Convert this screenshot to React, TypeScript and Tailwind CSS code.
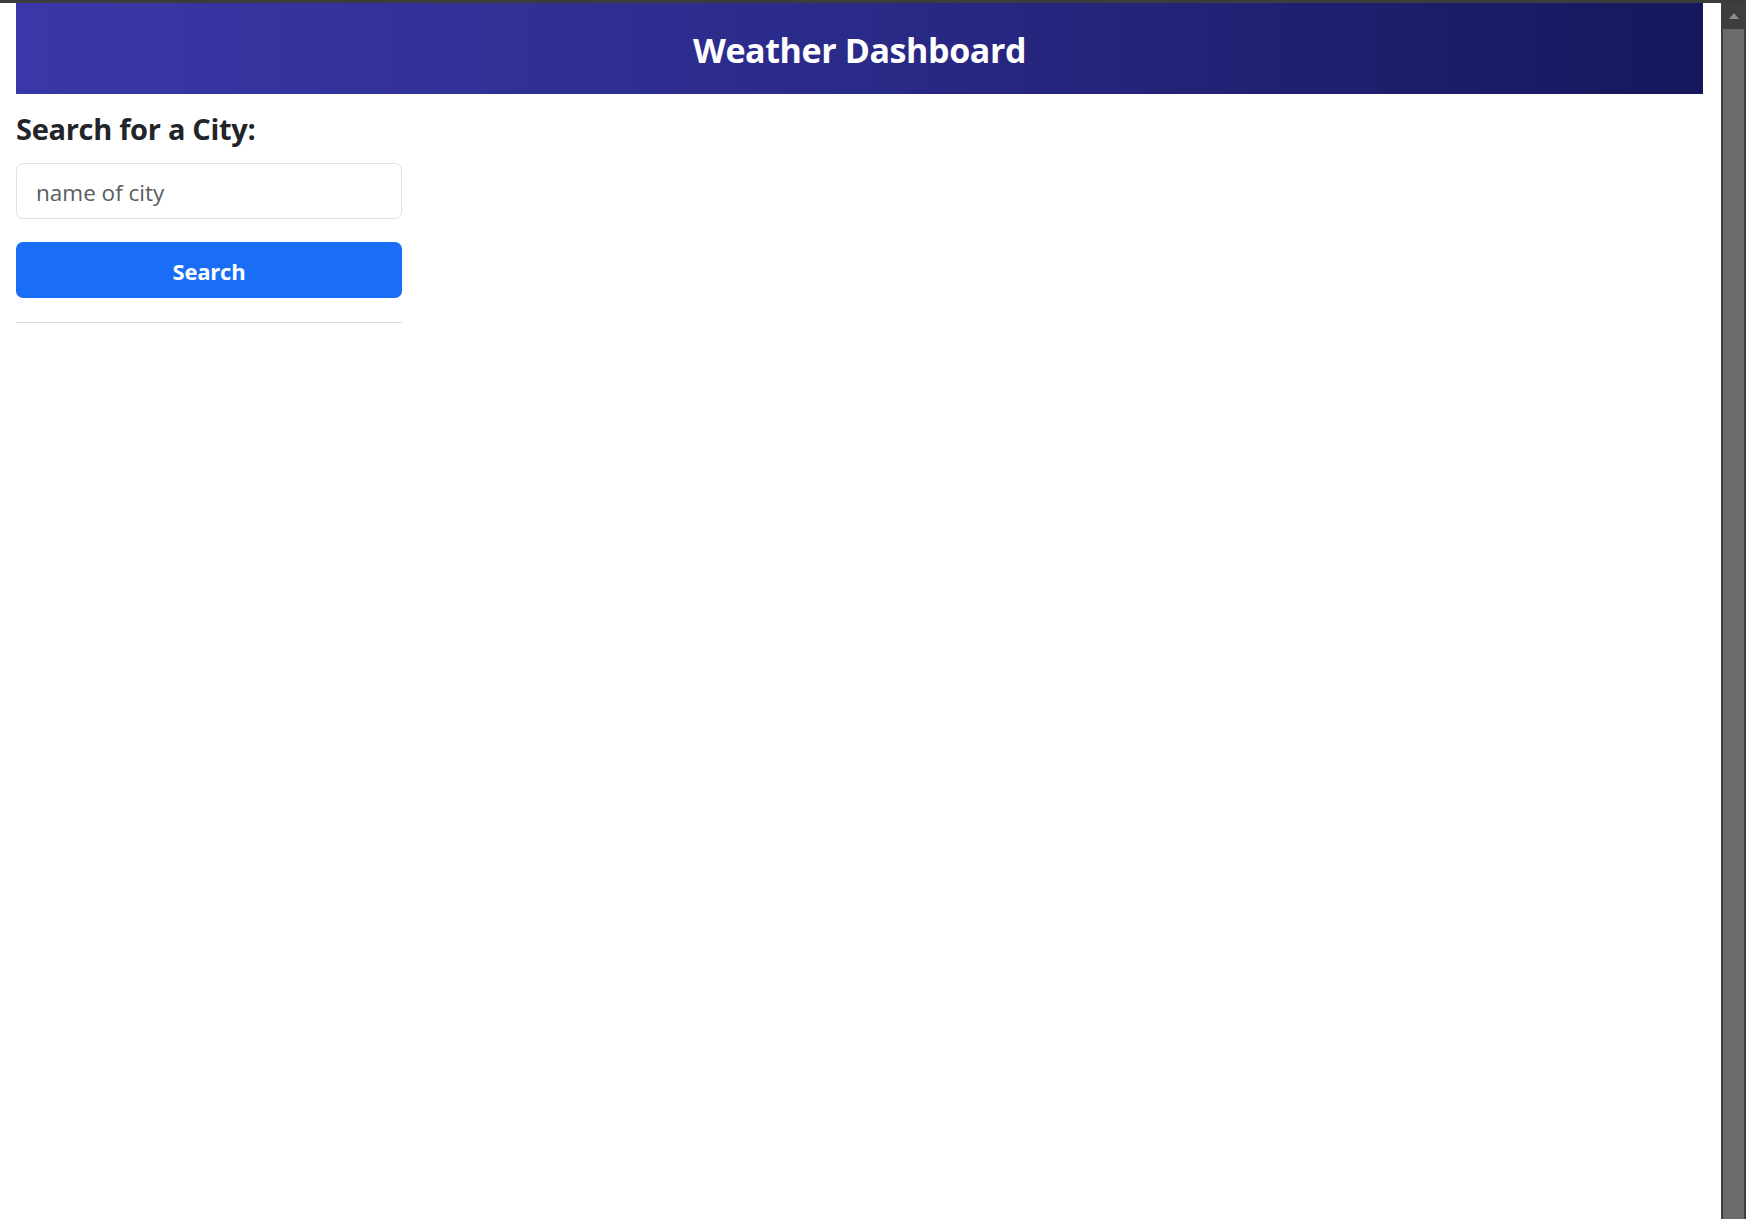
import React from "react";

export default function App() {
  return (
    <div
      className="w-full h-[1219px] flex flex-col bg-white overflow-hidden"
      style={{ fontFamily: '"Open Sans", "Noto Sans", sans-serif' }}
    >
      <div className="h-[3px] w-full bg-[#3c3c3c] shrink-0" />
      <div className="flex flex-row flex-1 min-h-0">
        <main className="flex-1 pl-[16px] pr-[18px]">
          <header className="h-[91px] w-full flex items-center justify-center bg-[linear-gradient(to_right,#3a38a8,#2a2a88_50%,#16175c)]">
            <h1 className="text-white font-bold text-[34px] leading-none tracking-[-0.4px] pt-[2px]">
              Weather Dashboard
            </h1>
          </header>
          <div className="w-[386px] flex flex-col">
            <h3 className="mt-[17px] text-[29px] leading-[36px] font-bold text-[#212529] tracking-[-0.3px]">
              Search for a City:
            </h3>
            <input
              type="text"
              placeholder="name of city"
              className="mt-[16px] h-[56px] w-full rounded-[7px] border border-[#dee2e6] bg-white px-[19px] pt-[3px] text-[22.5px] text-[#212529] placeholder:text-[#595c5f] outline-none"
            />
            <button className="mt-[23px] h-[56px] w-full rounded-[7px] bg-[#1a6ef6] text-white text-[22px] font-bold tracking-[-0.2px] pt-[2px]">
              Search
            </button>
            <hr className="mt-[24px] border-0 border-t border-[#dcdcdc]" />
          </div>
        </main>
        <div className="w-[25px] shrink-0 bg-[#3e3e3e] flex flex-col items-center">
          <div className="h-[26px] w-full flex items-center justify-center">
            <svg width="10" height="6" viewBox="0 0 10 6">
              <path d="M0 6 L5 0 L10 6 Z" fill="#8a8a8a" />
            </svg>
          </div>
          <div className="w-[21px] flex-1 bg-[#6b6b6b]" />
        </div>
      </div>
    </div>
  );
}
